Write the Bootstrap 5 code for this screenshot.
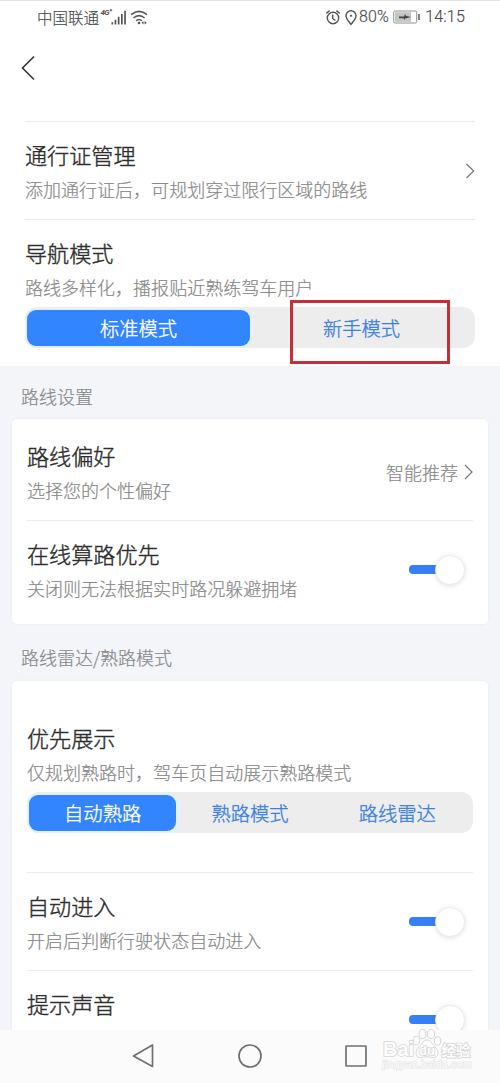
<!DOCTYPE html>
<html lang="zh-CN">
<head>
<meta charset="utf-8">
<meta name="viewport" content="width=device-width, initial-scale=1">
<title>导航设置</title>
<link href="https://cdn.jsdelivr.net/npm/bootstrap@5.3.0/dist/css/bootstrap.min.css" rel="stylesheet">
<style>
  body { font-family: "Noto Sans CJK SC", sans-serif; background: #fff; color: #2e2e2e; }
  .screen { width: 500px; height: 1083px; }
  .statusbar { height: 34px; padding: 0 35px 2px 37px; font-size: 15.5px; line-height: 32px; font-weight: 300; color: #4c4c4c; -webkit-text-stroke: .2px; border-top: 1px solid #e2e2e2; }
  .latin { font-family: Roboto, sans-serif; font-size: 16px; font-weight: 300; -webkit-text-stroke: .2px #555; letter-spacing: .2px; }
  .topbar { height: 87px; padding: 19px 0 0 21px; }
  .pane { padding: 0 25px; }
  .setting { padding: 15px 0 12px; }
  .rule { height: 1px; background: #ececee; }
  .ttl { font-size: 22.1px; line-height: 34px; font-weight: 300; -webkit-text-stroke: .4px; }
  .sub { font-size: 18.03px; line-height: 36px; font-weight: 300; color: #888; -webkit-text-stroke: .2px; white-space: nowrap; }
  .side { margin-bottom: 3px; }
  .gray { background: #f3f5f8; }
  .section-label { font-size: 18px; line-height: 34px; font-weight: 300; color: #888; -webkit-text-stroke: .2px; padding-left: 21px; }
  .panel { margin: 0 12px; padding: 0 15px; background: #fff; border-radius: 5px; box-shadow: 0 0 3px rgba(40,50,70,.06); }
  .seg { height: 41px; padding: 0 2px; border-radius: 12px; background: #ededee; font-size: 19.3px; margin: 2px 0 1px; color: #3a80dd; font-weight: 300; -webkit-text-stroke: .35px; }
  .seg > div { flex: 1 1 0; height: 36px; line-height: 37px; text-align: center; border-radius: 9px; }
  .seg > .on { background: #3385ff; color: #fff; box-shadow: 0 0 0 2px #e2f0fe; }
  .marker { left: 290px; top: 300px; width: 160px; height: 64px; border: 3px solid #c52f38; }
  .toggle { width: 56px; height: 30px; }
  .toggle .track { position: absolute; left: 0; top: 10px; width: 40px; height: 9px; border-radius: 4px; background: #3580f5; }
  .toggle .knob { position: absolute; left: 26px; top: 0; width: 30px; height: 30px; border-radius: 50%; background: #fff; border: 1px solid #ececec; box-shadow: 0 1px 5px rgba(0,0,0,.13); }
  .navbtns { height: 53px; padding-bottom: 2px; background: #fbfbfb; }
  .wm { right: 26px; bottom: 11px; width: 96px; height: 46px; }
</style>
</head>
<body>
<div class="screen d-flex flex-column position-relative overflow-hidden">
  <header class="statusbar d-flex align-items-center flex-shrink-0">
    <span>中国联通</span>
    <svg width="50" height="20" viewBox="0 0 50 20" fill="#555" stroke-width="0">
      <text x="1.500" y="8" font-family="Roboto" font-size="8" font-weight="700" font-style="italic" textLength="9" style="-webkit-text-stroke:0">4G</text>
      <path d="M10.800 3.200h2.400M12 2v2.400" stroke="#555" stroke-width=".9"/>
      <path d="M12.500 15.200h1.700v2.300h-1.700zM15.600 12.800h1.700v4.700h-1.700zM18.800 9.800h1.700v7.700h-1.700zM22 7h1.700v10.500H22zM25.200 3.800h1.700v13.700h-1.700z"/>
      <g fill="none" stroke="#555" stroke-width="1.500"><path d="M32 7.700q8-6.600 16 0M34.400 11q5.600-4.800 11.200 0M37 13.800q3-2.600 6 0"/></g>
      <circle cx="40" cy="16" r="1.300"/><path d="m42.500 15.700 2-1.800v3.600zM47.800 15.700l-2.200-1.800v3.600z"/>
    </svg>
    <svg class="ms-auto" width="34" height="20" viewBox="0 0 34 20" fill="none" stroke="#555" stroke-width="1.400">
      <circle cx="8" cy="11" r="5.700"/><path d="M7.700 7.500v4l2.700 2M1.300 6.500 4.600 3.600M14.700 6.500l-3.300-2.900"/>
      <path d="M26 17.300c-2-2.600-5-5.400-5-8.600a5 5 0 0 1 10 0c0 3.200-3 6-5 8.600z"/><circle cx="26" cy="8.800" r="1.100" fill="#555" stroke="none"/>
    </svg>
    <span class="latin">80%</span>
    <svg class="ms-1" width="28" height="20" viewBox="0 0 28 20">
      <rect x=".7" y="4" width="23" height="12" rx="1.500" fill="#fff" stroke="#909090"/>
      <path d="M2 5.200h16v9.600H2z" fill="#c4c4c4"/><path d="M6 9.500h5.200l.6-2.200 1.600 1.800 4.600.9-4.600 1.200h-1.200l-.8 1.800-1-1.800H6z" fill="#444"/>
      <path d="M25.200 7h1.600v6h-1.600z" fill="#666"/>
    </svg>
    <span class="latin ms-1">14:15</span>
  </header>

  <div class="topbar flex-shrink-0">
    <svg width="15" height="26" viewBox="0 0 15 26" fill="none" stroke="#333" stroke-width="1.600"><path d="M13 1.500 1.500 13 13 24.500"/></svg>
  </div>

  <main class="flex-grow-1 overflow-hidden">
    <section class="pane">
      <div class="rule"></div>
      <div class="setting d-flex align-items-center justify-content-between">
        <div><div class="ttl">通行证管理</div><div class="sub">添加通行证后，可规划穿过限行区域的路线</div></div>
        <svg class="side" width="10" height="16" viewBox="0 0 10 16" fill="none" stroke="#777" stroke-width="1.200"><path d="M1.500 1 8.700 8 1.500 15"/></svg>
      </div>
      <div class="rule"></div>
      <div class="setting pb-0">
        <div class="ttl">导航模式</div><div class="sub">路线多样化，播报贴近熟练驾车用户</div>
        <div class="seg d-flex align-items-center"><div class="on">标准模式</div><div>新手模式</div></div>
      </div>
      <div style="height:17px"></div>
    </section>

    <div class="gray">
      <div class="section-label" style="padding-top:13px;padding-bottom:6px">路线设置</div>
      <section class="panel">
        <div class="setting d-flex align-items-center justify-content-between" style="padding-top:19px">
          <div><div class="ttl">路线偏好</div><div class="sub">选择您的个性偏好</div></div>
          <div class="side d-flex align-items-center sub">智能推荐
            <svg style="margin-left:6px" width="9" height="16" viewBox="0 0 9 16" fill="none" stroke="#777" stroke-width="1.200"><path d="M1 1 8 8 1 15"/></svg></div>
        </div>
        <div class="rule"></div>
        <div class="setting d-flex align-items-center justify-content-between" style="padding-bottom:18px">
          <div><div class="ttl">在线算路优先</div><div class="sub">关闭则无法根据实时路况躲避拥堵</div></div>
          <div class="toggle side position-relative me-2"><div class="track"></div><div class="knob"></div></div>
        </div>
      </section>

      <div class="section-label" style="padding-top:16px;padding-bottom:7px">路线雷达/熟路模式</div>
      <section class="panel">
        <div class="setting" style="padding-top:39px;padding-bottom:38px">
          <div class="ttl">优先展示</div><div class="sub">仅规划熟路时，驾车页自动展示熟路模式</div>
          <div class="seg d-flex align-items-center"><div class="on">自动熟路</div><div>熟路模式</div><div>路线雷达</div></div>
        </div>
        <div class="rule"></div>
        <div class="setting d-flex align-items-center justify-content-between">
          <div><div class="ttl">自动进入</div><div class="sub">开启后判断行驶状态自动进入</div></div>
          <div class="toggle side position-relative me-2"><div class="track"></div><div class="knob"></div></div>
        </div>
        <div class="rule"></div>
        <div class="setting d-flex align-items-center justify-content-between">
          <div><div class="ttl">提示声音</div><div class="sub">&nbsp;</div></div>
          <div class="toggle side position-relative me-2"><div class="track"></div><div class="knob"></div></div>
        </div>
      </section>
    </div>
  </main>

  <nav class="navbtns d-flex flex-shrink-0 align-items-center justify-content-center">
    <svg width="240" height="28" viewBox="0 0 240 28" fill="none" stroke="#707070" stroke-width="1.700" stroke-linejoin="round">
      <path d="M22.500 3v21.500L3.500 14z"/><circle cx="120" cy="14" r="11"/><rect x="216" y="4" width="20" height="20" rx=".5"/>
    </svg>
  </nav>

  <svg class="wm position-absolute" viewBox="0 0 96 46" fill="#fdfdfd" stroke="#d6d6d6" stroke-width="1">
    <g font-family="Liberation Sans" font-weight="700">
      <ellipse cx="38.300" cy="14.500" rx="3.200" ry="4.200"/><ellipse cx="44.500" cy="8" rx="3.500" ry="4.600"/><ellipse cx="53" cy="8" rx="3.500" ry="4.600"/><ellipse cx="59.500" cy="15" rx="3.200" ry="4.200"/>
      <path d="M49 14c4 0 5 4 8 7 4.500 4 4 10.500-1.500 10.500-3 0-4-.8-6.500-.8s-4 .8-6.500.8c-5.500 0-6-6.500-1.500-10.500 3-3 4-7 8-7z"/>
      <text x="5" y="30" font-size="20" textLength="31" paint-order="stroke" stroke-width="1.600">Bai</text>
      <text x="41" y="29" font-size="13" textLength="16" paint-order="stroke" stroke-width="1.600">du</text>
      <text x="63.500" y="29.500" font-size="14.500" font-family="Noto Sans CJK SC" textLength="29" paint-order="stroke" stroke-width="1.600">经验</text>
    </g>
    <text x="4.500" y="42" font-family="Liberation Sans" font-size="10.500" textLength="89" paint-order="stroke" stroke="#e4e4e4" stroke-width="1.200">jingyan.baidu.com</text>
  </svg>
  <div class="marker position-absolute"></div>
</div>
<script src="https://cdn.jsdelivr.net/npm/bootstrap@5.3.0/dist/js/bootstrap.bundle.min.js"></script>
</body>
</html>
